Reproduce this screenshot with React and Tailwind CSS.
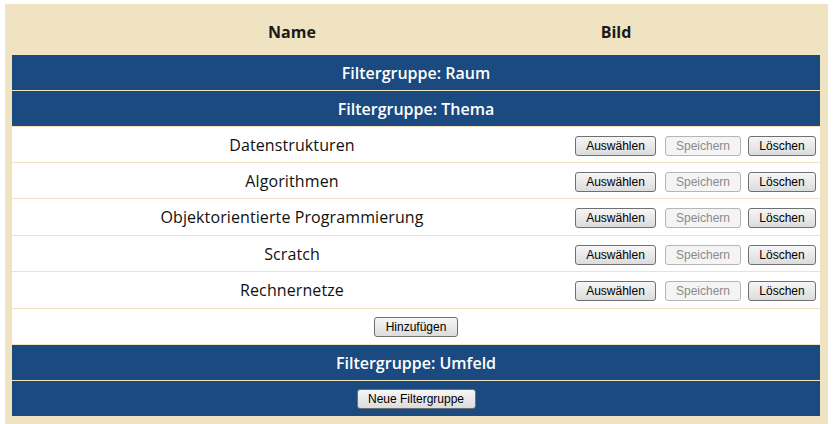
import React from "react";

const themen = [
  { name: "Datenstrukturen", h: "h-[35px]" },
  { name: "Algorithmen", h: "h-[35px]" },
  { name: "Objektorientierte Programmierung", h: "h-[36px]" },
  { name: "Scratch", h: "h-[35px]" },
  { name: "Rechnernetze", h: "h-[36px]" },
];

const btn =
  "h-[20px] rounded-[3px] border border-[#707070] bg-gradient-to-b from-[#f6f6f6] to-[#dcdcdc] text-[12px] text-black leading-none";
const btnDisabled =
  "h-[20px] rounded-[3px] border border-[#b5b5b5] bg-[#f4f4f4] text-[12px] text-[#8a8a8a] leading-none";

const GroupRow = ({ children }) => (
  <div className="h-[35px] bg-[#1b4a80] flex items-center justify-center text-white font-semibold text-[16px]">
    {children}
  </div>
);

const App = () => {
  return (
    <div className="bg-white pl-[5px] pt-[4px] w-[834px] h-[424px]" style={{ fontFamily: "'Open Sans', sans-serif" }}>
      <div className="w-[823px] h-[420px] bg-[#f0e3c1] pl-[7px] pr-[8px]">
        {/* header */}
        <div className="h-[51px] flex items-end pb-[11px] font-bold text-[16px] text-[#1a1a1a]">
          <div className="w-[560px] text-center">Name</div>
          <div className="w-[88px] text-center">Bild</div>
        </div>

        <div className="flex flex-col gap-px">
          <GroupRow>Filtergruppe: Raum</GroupRow>
          <GroupRow>Filtergruppe: Thema</GroupRow>

          {themen.map((t) => (
            <div key={t.name} className={t.h + " bg-white flex items-center"}>
              <div className="w-[560px] text-center text-[16px] font-medium text-[#111] tracking-[0.1px]">{t.name}</div>
              <div
                className="flex-1 flex items-center justify-end gap-[9px] pr-[4px] pt-[2px]"
                style={{ fontFamily: "'Liberation Sans', Arial, sans-serif" }}
              >
                <button className={btn + " w-[81px]"}>Auswählen</button>
                <button className={btnDisabled + " w-[76px] -mr-[2px]"} disabled>
                  Speichern
                </button>
                <button className={btn + " w-[68px]"}>Löschen</button>
              </div>
            </div>
          ))}

          <div
            className="h-[35px] bg-white flex items-center justify-center"
            style={{ fontFamily: "'Liberation Sans', Arial, sans-serif" }}
          >
            <button className={btn + " w-[84px]"}>Hinzufügen</button>
          </div>

          <GroupRow>Filtergruppe: Umfeld</GroupRow>

          <div
            className="h-[35px] bg-[#1b4a80] flex items-center justify-center"
            style={{ fontFamily: "'Liberation Sans', Arial, sans-serif" }}
          >
            <button className={btn + " w-[119px]"}>Neue Filtergruppe</button>
          </div>
        </div>
      </div>
    </div>
  );
};

export default App;
